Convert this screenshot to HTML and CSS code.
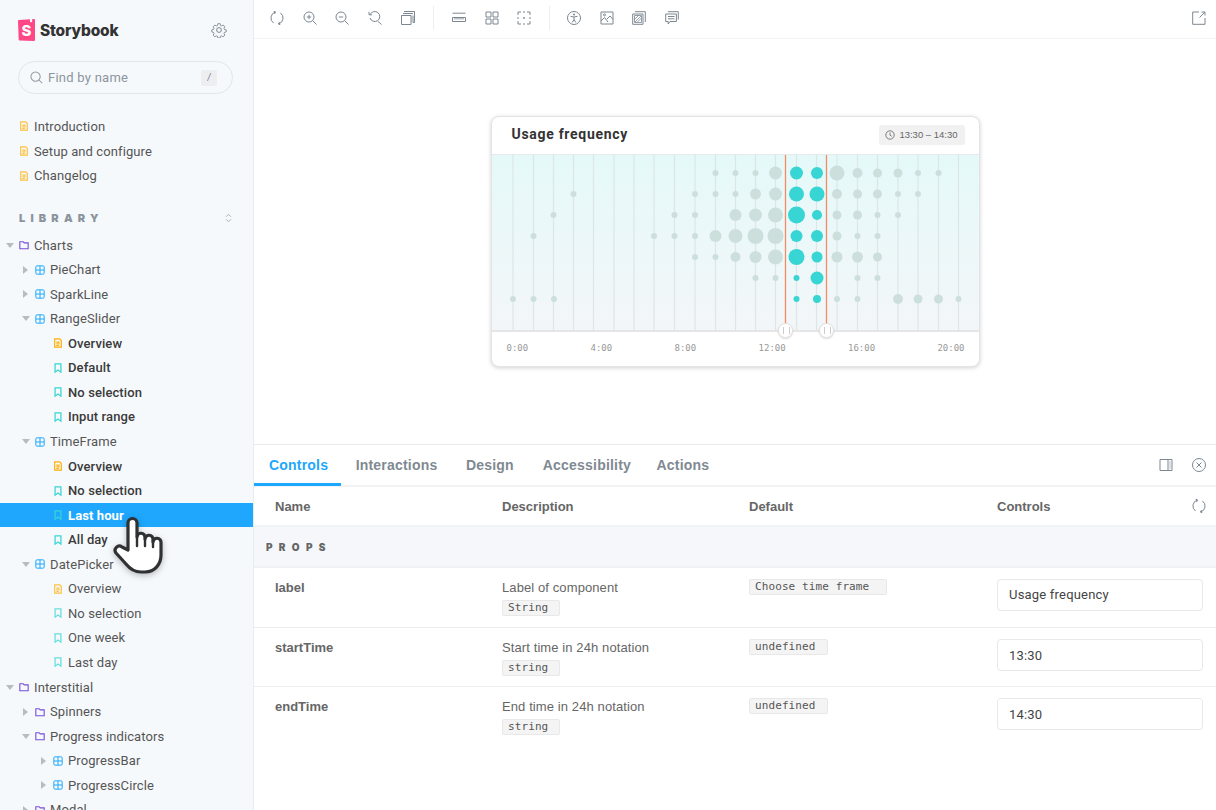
FILE: index.html
```html
<!DOCTYPE html>
<html lang="en">
<head>
<meta charset="utf-8">
<title>Storybook</title>
<link rel="stylesheet" href="styles.css">
</head>
<body>
<svg class="defs" width="0" height="0" aria-hidden="true">
  <symbol id="i-doc" viewBox="0 0 12 12"><path d="M2 1h6l2 2v8H2zM4 5h4M4 7h4M4 9h3" fill="none" stroke="currentColor" stroke-width="1.400"/></symbol>
  <symbol id="i-book" viewBox="0 0 12 12"><path d="M2.500 1h7v10L6 8.500 2.500 11z" fill="none" stroke="currentColor" stroke-width="1.500"/></symbol>
  <symbol id="i-folder" viewBox="0 0 12 12"><path d="M1 2h4l1.200 1.400H11v7H1z" fill="none" stroke="currentColor" stroke-width="1.300"/></symbol>
  <symbol id="i-comp" viewBox="0 0 12 12"><path d="M2.500 1h7A1.500 1.500 0 0 1 11 2.500v7A1.500 1.500 0 0 1 9.500 11h-7A1.500 1.500 0 0 1 1 9.500v-7A1.500 1.500 0 0 1 2.500 1zM6 1v10M1 6h10" fill="none" stroke="currentColor" stroke-width="1.200"/></symbol>
  <symbol id="t-sync" viewBox="0 0 14 14"><path d="M5.500 1A6.200 6.200 0 0 0 3.500 12M8.500 13A6.200 6.200 0 0 0 10.500 2M3.600 .2l1.900.8-1 1.900M10.400 13.800 8.500 13l1-1.900" fill="none" stroke="currentColor"/></symbol>
  <symbol id="t-zin" viewBox="0 0 14 14"><circle cx="6" cy="6" r="5" fill="none" stroke="currentColor"/><path d="M9.700 9.700 13.500 13.500M3.800 6h4.400M6 3.800v4.400" fill="none" stroke="currentColor"/></symbol>
  <symbol id="t-zout" viewBox="0 0 14 14"><circle cx="6" cy="6" r="5" fill="none" stroke="currentColor"/><path d="M9.700 9.700 13.500 13.500M3.800 6h4.400" fill="none" stroke="currentColor"/></symbol>
  <symbol id="t-zreset" viewBox="0 0 14 14"><path d="M2.200 3.500A5 5 0 1 1 2 7M1 .8v3h3M9.700 10.200 13.500 13.500" fill="none" stroke="currentColor"/></symbol>
  <symbol id="t-stack" viewBox="0 0 14 14"><path d="M.5 4.500h9.500v9H.5zM2 2.500h10M3 .5h10.500v11H12" fill="none" stroke="currentColor"/><path d="M10.500 4.500H13v7h-2.500z" fill="currentColor" opacity=".5"/></symbol>
  <symbol id="t-ruler" viewBox="0 0 14 14"><path d="M.5 2.200h13M.5 6.500h13v4h-13z" fill="none" stroke="currentColor"/><path d="M3 6.500v2M5 6.500v2M7 6.500v2M9 6.500v2M11 6.500v2" stroke="currentColor" fill="none"/></symbol>
  <symbol id="t-grid" viewBox="0 0 14 14"><path d="M1 1h5v5H1zM8 1h5v5H8zM1 8h5v5H1zM8 8h5v5H8z" fill="none" stroke="currentColor"/></symbol>
  <symbol id="t-outline" viewBox="0 0 14 14"><path d="M4 1H1v3M10 1h3v3M4 13H1v-3M10 13h3v-3M1 6v2M13 6v2M6 1h2M6 13h2" fill="none" stroke="currentColor"/><circle cx="7" cy="7" r=".9" fill="currentColor"/></symbol>
  <symbol id="t-a11y" viewBox="0 0 14 14"><circle cx="7" cy="7" r="6.500" fill="none" stroke="currentColor"/><circle cx="7" cy="3.600" r="1" fill="currentColor"/><path d="M3.500 5.300 7 6l3.500-.7M7 6v2.500M7 8.500l-1.800 3M7 8.500l1.800 3" fill="none" stroke="currentColor"/></symbol>
  <symbol id="t-photo" viewBox="0 0 14 14"><path d="M1 1h12v12H1zM1 10l3.500-3.500L8 11M7 8l3-3 3 3.500" fill="none" stroke="currentColor"/><circle cx="4.500" cy="3.800" r="1" fill="none" stroke="currentColor"/></symbol>
  <symbol id="t-contrast" viewBox="0 0 14 14"><path d="M3 .7h10.300V11M.7 3h10.300v10.300H.7z" fill="none" stroke="currentColor"/><path d="M2.500 4.500h7v7h-7zM3 11l6-6M5 11.500l4.500-4.500M2.500 8.500l4-4" fill="none" stroke="currentColor" stroke-width=".8"/></symbol>
  <symbol id="t-comment" viewBox="0 0 14 14"><path d="M3 .7h10.300v8M.7 3h10.700v7.500H5l-1.800 2.500v-2.500H.7zM3 5.500h6.500M3 7.800h6.500" fill="none" stroke="currentColor"/></symbol>
  <symbol id="t-open" viewBox="0 0 14 14"><path d="M7 1H.7v12.300H13V7M7.500 6.500 13 1M9.500 1H13v3.500" fill="none" stroke="currentColor"/></symbol>
  <symbol id="t-side" viewBox="0 0 14 14"><path d="M1 1.500h12v11H1zM9 1.500v11M10.500 4h1M10.500 6h1M10.500 8h1M10.500 10h1" fill="none" stroke="currentColor"/></symbol>
  <symbol id="t-close" viewBox="0 0 14 14"><circle cx="7" cy="7" r="6.500" fill="none" stroke="currentColor"/><path d="m4.500 4.500 5 5M9.500 4.500l-5 5" fill="none" stroke="currentColor"/></symbol>
</svg>

<div class="app">
  <aside class="sidebar">
    <header class="brand">
      <svg class="logo" viewBox="0 0 17 22" width="17" height="22">
        <path d="M.7 20.600 0 2a1 1 0 0 1 1-1l11-.7v3.200l1-.8 1.100.8V.2l1.800-.1a1 1 0 0 1 1.100 1v19.800a1 1 0 0 1-1 1L1.700 21.500a1 1 0 0 1-1-.9z" fill="#ff4785"/>
        <text x="8.500" y="16.800" class="logo-s">S</text>
      </svg>
      <span class="wordmark">Storybook</span>
      <svg class="gear" viewBox="0 0 16 16" width="16" height="16"><path d="M6.700 1h2.600l.4 1.900 1.300.6 1.700-1 1.800 1.900-1 1.600.6 1.400 1.900.4v2.400l-1.900.4-.6 1.400 1 1.700-1.800 1.800-1.700-1-1.300.5-.4 1.900H6.700l-.4-1.900-1.300-.5-1.700 1-1.800-1.800 1-1.700-.6-1.400-1.900-.4V7.800l1.900-.4.6-1.400-1-1.600 1.800-1.900 1.700 1 1.300-.6z" transform="translate(.8 .8) scale(.9)" fill="none" stroke="#7d8791"/><circle cx="8" cy="8" r="2.400" fill="none" stroke="#7d8791"/></svg>
    </header>

    <div class="search">
      <svg class="search-icon" viewBox="0 0 14 14" width="13" height="13"><circle cx="6" cy="6" r="5" fill="none" stroke="#8f98a1" stroke-width="1.100"/><path d="m9.700 9.700 3.500 3.500" stroke="#8f98a1" stroke-width="1.100"/></svg>
      <span class="search-text">Find by name</span>
      <kbd class="search-key">/</kbd>
    </div>

    <nav class="tree tree-top">
      <div class="row d0 faded"><i class="arrow blank"></i><svg class="ic doc"><use href="#i-doc"/></svg><span>Introduction</span></div>
      <div class="row d0 faded"><i class="arrow blank"></i><svg class="ic doc"><use href="#i-doc"/></svg><span>Setup and configure</span></div>
      <div class="row d0 faded"><i class="arrow blank"></i><svg class="ic doc"><use href="#i-doc"/></svg><span>Changelog</span></div>
    </nav>

    <div class="lib-head"><span>LIBRARY</span><svg viewBox="0 0 8 12" width="7" height="10"><path d="M1 4.500 4 1.500l3 3M1 7.500l3 3 3-3" fill="none" stroke="#9aa3ad"/></svg></div>

    <nav class="tree">
      <div class="row d0"><i class="arrow open"></i><svg class="ic folder"><use href="#i-folder"/></svg><span>Charts</span></div>
      <div class="row d1"><i class="arrow"></i><svg class="ic comp"><use href="#i-comp"/></svg><span>PieChart</span></div>
      <div class="row d1"><i class="arrow"></i><svg class="ic comp"><use href="#i-comp"/></svg><span>SparkLine</span></div>
      <div class="row d1"><i class="arrow open"></i><svg class="ic comp"><use href="#i-comp"/></svg><span>RangeSlider</span></div>
      <div class="row d2 strong"><svg class="ic doc"><use href="#i-doc"/></svg><span>Overview</span></div>
      <div class="row d2 strong"><svg class="ic book"><use href="#i-book"/></svg><span>Default</span></div>
      <div class="row d2 strong"><svg class="ic book"><use href="#i-book"/></svg><span>No selection</span></div>
      <div class="row d2 strong"><svg class="ic book"><use href="#i-book"/></svg><span>Input range</span></div>
      <div class="row d1"><i class="arrow open"></i><svg class="ic comp"><use href="#i-comp"/></svg><span>TimeFrame</span></div>
      <div class="row d2 strong"><svg class="ic doc"><use href="#i-doc"/></svg><span>Overview</span></div>
      <div class="row d2 strong"><svg class="ic book"><use href="#i-book"/></svg><span>No selection</span></div>
      <div class="row d2 selected"><svg class="ic book"><use href="#i-book"/></svg><span>Last hour</span></div>
      <div class="row d2 strong"><svg class="ic book"><use href="#i-book"/></svg><span>All day</span></div>
      <div class="row d1"><i class="arrow open"></i><svg class="ic comp"><use href="#i-comp"/></svg><span>DatePicker</span></div>
      <div class="row d2 faded"><svg class="ic doc"><use href="#i-doc"/></svg><span>Overview</span></div>
      <div class="row d2 faded"><svg class="ic book"><use href="#i-book"/></svg><span>No selection</span></div>
      <div class="row d2 faded"><svg class="ic book"><use href="#i-book"/></svg><span>One week</span></div>
      <div class="row d2 faded"><svg class="ic book"><use href="#i-book"/></svg><span>Last day</span></div>
      <div class="row d0"><i class="arrow open"></i><svg class="ic folder"><use href="#i-folder"/></svg><span>Interstitial</span></div>
      <div class="row d1"><i class="arrow"></i><svg class="ic folder"><use href="#i-folder"/></svg><span>Spinners</span></div>
      <div class="row d1"><i class="arrow open"></i><svg class="ic folder"><use href="#i-folder"/></svg><span>Progress indicators</span></div>
      <div class="row d2x"><i class="arrow"></i><svg class="ic comp"><use href="#i-comp"/></svg><span>ProgressBar</span></div>
      <div class="row d2x"><i class="arrow"></i><svg class="ic comp"><use href="#i-comp"/></svg><span>ProgressCircle</span></div>
      <div class="row d1"><i class="arrow"></i><svg class="ic folder"><use href="#i-folder"/></svg><span>Modal</span></div>
    </nav>
  </aside>

  <main class="main">
    <div class="toolbar">
      <svg class="tool"><use href="#t-sync"/></svg>
      <svg class="tool"><use href="#t-zin"/></svg>
      <svg class="tool"><use href="#t-zout"/></svg>
      <svg class="tool"><use href="#t-zreset"/></svg>
      <svg class="tool"><use href="#t-stack"/></svg>
      <i class="tool-sep"></i>
      <svg class="tool"><use href="#t-ruler"/></svg>
      <svg class="tool"><use href="#t-grid"/></svg>
      <svg class="tool"><use href="#t-outline"/></svg>
      <i class="tool-sep tool-sep-b"></i>
      <svg class="tool"><use href="#t-a11y"/></svg>
      <svg class="tool"><use href="#t-photo"/></svg>
      <svg class="tool"><use href="#t-contrast"/></svg>
      <svg class="tool"><use href="#t-comment"/></svg>
      <svg class="tool tool-end"><use href="#t-open"/></svg>
    </div>

    <section class="canvas">
      <div class="card">
        <div class="card-head">
          <span class="card-title">Usage frequency</span>
          <span class="range-chip"><svg viewBox="0 0 12 12" width="10" height="10"><circle cx="6" cy="6" r="5" fill="none" stroke="#666"/><path d="M6 3v3.200l2 1.300" fill="none" stroke="#666"/></svg>13:30 – 14:30</span>
        </div>
        <div class="plot">
          <svg class="plot-svg" viewBox="0 0 487 175" width="487" height="175">
            <defs><linearGradient id="plot-bg" x1="0" y1="0" x2="0" y2="1"><stop offset="0" stop-color="#e5f9f9"/><stop offset="1" stop-color="#f3f6f9"/></linearGradient></defs>
            <rect width="487" height="175" fill="url(#plot-bg)"/>
            <g class="gridlines">
              <path d="M21 0v175M41.500 0v175M61.500 0v175M81.500 0v175M101.500 0v175M122 0v175M142 0v175M162 0v175M182.500 0v175M203 0v175M223.500 0v175M243.500 0v175M263.500 0v175M283.500 0v175M304.500 0v175M324.500 0v175M345 0v175M365.500 0v175M385.500 0v175M406 0v175M426 0v175M446.500 0v175M466.500 0v175"/>
            </g>
            <g class="dots">
              <circle cx="223.500" cy="18" r="3"/><circle cx="243.500" cy="18" r="3"/><circle cx="263.500" cy="18" r="3"/><circle cx="283.500" cy="18" r="6.500"/><circle cx="345" cy="18" r="7.500"/><circle cx="365.500" cy="18" r="5"/><circle cx="385.500" cy="18" r="4.500"/><circle cx="406" cy="18" r="4.500"/><circle cx="426" cy="18" r="3"/><circle cx="446.500" cy="18" r="3"/>
              <circle cx="81.500" cy="39" r="3"/><circle cx="203" cy="39" r="3"/><circle cx="223.500" cy="39" r="3"/><circle cx="243.500" cy="39" r="3"/><circle cx="263.500" cy="39" r="5.500"/><circle cx="283.500" cy="39" r="6.500"/><circle cx="345" cy="39" r="5"/><circle cx="365.500" cy="39" r="4.500"/><circle cx="385.500" cy="39" r="4.500"/><circle cx="406" cy="39" r="3"/><circle cx="426" cy="39" r="3"/>
              <circle cx="61.500" cy="60" r="3"/><circle cx="182.500" cy="60" r="3"/><circle cx="203" cy="60" r="3"/><circle cx="243.500" cy="60" r="6"/><circle cx="263.500" cy="60" r="6.500"/><circle cx="283.500" cy="60" r="7.500"/><circle cx="345" cy="60" r="4.500"/><circle cx="365.500" cy="60" r="4.500"/><circle cx="385.500" cy="60" r="3"/><circle cx="406" cy="60" r="3"/>
              <circle cx="41.500" cy="81" r="3"/><circle cx="162" cy="81" r="3"/><circle cx="182.500" cy="81" r="3"/><circle cx="203" cy="81" r="3"/><circle cx="223.500" cy="81" r="6"/><circle cx="243.500" cy="81" r="7"/><circle cx="263.500" cy="81" r="8"/><circle cx="283.500" cy="81" r="8"/><circle cx="345" cy="81" r="4.500"/><circle cx="365.500" cy="81" r="3"/><circle cx="385.500" cy="81" r="3"/>
              <circle cx="203" cy="102" r="3"/><circle cx="223.500" cy="102" r="3"/><circle cx="243.500" cy="102" r="5"/><circle cx="263.500" cy="102" r="6"/><circle cx="283.500" cy="102" r="7.500"/><circle cx="345" cy="102" r="5.500"/><circle cx="365.500" cy="102" r="5.500"/><circle cx="385.500" cy="102" r="4.500"/>
              <circle cx="263.500" cy="123" r="3"/><circle cx="283.500" cy="123" r="3"/><circle cx="365.500" cy="123" r="3"/><circle cx="385.500" cy="123" r="3"/>
              <circle cx="21" cy="144" r="3"/><circle cx="41.500" cy="144" r="3"/><circle cx="62" cy="144" r="3"/><circle cx="345" cy="144" r="3"/><circle cx="365.500" cy="144" r="3"/><circle cx="406" cy="144" r="5"/><circle cx="426" cy="144" r="4.500"/><circle cx="446.500" cy="144" r="4.500"/><circle cx="466.500" cy="144" r="3"/>
            </g>
            <g class="dots-on">
              <circle cx="304.500" cy="18" r="6.500"/><circle cx="325" cy="18" r="6"/>
              <circle cx="304.500" cy="39" r="7.500"/><circle cx="325" cy="39" r="7.500"/>
              <circle cx="304.500" cy="60" r="8.500"/><circle cx="325" cy="60" r="5"/>
              <circle cx="304.500" cy="81" r="6"/><circle cx="325" cy="81" r="6"/>
              <circle cx="304.500" cy="102" r="8"/><circle cx="325" cy="102" r="5.500"/>
              <circle cx="304.500" cy="123" r="3"/><circle cx="325" cy="123" r="6.500"/>
              <circle cx="304.500" cy="144" r="3"/><circle cx="325" cy="144" r="4"/>
            </g>
            <path class="marker" d="M293.500 0v175M334.500 0v175"/>
          </svg>
          <i class="handle handle-a"></i>
          <i class="handle handle-b"></i>
        </div>
        <div class="axis"><span>0:00</span><span>4:00</span><span>8:00</span><span>12:00</span><span>16:00</span><span>20:00</span></div>
      </div>
    </section>

    <section class="panel">
      <div class="tabs">
        <span class="tab active">Controls</span>
        <span class="tab">Interactions</span>
        <span class="tab">Design</span>
        <span class="tab">Accessibility</span>
        <span class="tab">Actions</span>
        <svg class="tool tab-icon tab-icon-first"><use href="#t-side"/></svg>
        <svg class="tool tab-icon"><use href="#t-close"/></svg>
      </div>
      <div class="args">
        <div class="arg-row arg-head">
          <span>Name</span><span>Description</span><span>Default</span>
          <span class="ctrl-head">Controls<svg class="tool"><use href="#t-sync"/></svg></span>
        </div>
        <div class="section-row">PROPS</div>
        <div class="arg-row arg-body">
          <b>label</b>
          <div><div class="desc">Label of component</div><code class="badge">String</code></div>
          <div class="default-cell"><code class="badge badge-wide">Choose time frame</code></div>
          <div class="field">Usage frequency</div>
        </div>
        <div class="arg-row arg-body">
          <b>startTime</b>
          <div><div class="desc">Start time in 24h notation</div><code class="badge">string</code></div>
          <div class="default-cell"><code class="badge">undefined</code></div>
          <div class="field">13:30</div>
        </div>
        <div class="arg-row arg-body arg-last">
          <b>endTime</b>
          <div><div class="desc">End time in 24h notation</div><code class="badge">string</code></div>
          <div class="default-cell"><code class="badge">undefined</code></div>
          <div class="field">14:30</div>
        </div>
      </div>
    </section>
  </main>
</div>

<svg class="hand" viewBox="0 0 58 68" width="58" height="68">
  <path d="M18 39V12a4.500 4.500 0 0 1 9 0V26a4 4 0 0 1 8 .5V28a4 4 0 0 1 8 .5V31a3.800 3.800 0 0 1 8 .5V44c0 9-6 17-16 17h-4c-7 0-11-3-15-8L6 42c-3-4 2-9 6-6z" fill="#fff" stroke="#2f3133" stroke-width="3.200" stroke-linejoin="round"/>
  <path d="M27 26v9M35 27v8M43 29v7" fill="none" stroke="#2f3133" stroke-width="2.400" stroke-linecap="round"/>
</svg>
</body>
</html>
```
FILE: styles.css
```css
* { box-sizing: border-box; }
html, body { margin: 0; height: 100%; overflow: hidden; }
body { position: relative; font-family: "Roboto", "Liberation Sans", sans-serif; background: #fff; color: #333; }
.defs { position: absolute; }
.app { display: flex; height: 810px; }

/* sidebar */
.sidebar { width: 254px; flex: none; height: 810px; overflow: hidden; background: #f6f9fc; border-right: 1px solid #e9ecef; }
.brand { display: flex; align-items: center; height: 22px; margin: 19px 0 0 18px; }
.logo { flex: none; }
.logo-s { font: 800 15px "Inter", sans-serif; fill: #fff; text-anchor: middle; }
.wordmark { margin-left: 5px; font: 800 15.500px "Inter", "Noto Sans", sans-serif; color: #333; letter-spacing: -.2px; }
.gear { margin-left: auto; margin-right: 26px; }
.search { display: flex; align-items: center; width: 215px; height: 33px; margin: 20px 0 0 18px; padding: 0 15px 0 10px; border: 1px solid #e3e6e9; border-radius: 17px; background: #f6f9fc; }
.search-icon { flex: none; margin: 0 5px 0 1px; }
.search-text { font-size: 13px; color: #8d959d; letter-spacing: .25px; }
.search-key { margin-left: auto; width: 16px; height: 16px; border-radius: 2px; background: #eceef0; color: #7d868f; font: italic 10px/16px "Liberation Sans", sans-serif; text-align: center; }
.tree { display: flex; flex-direction: column; }
.tree-top { margin-top: 20.200px; }
.row { display: flex; align-items: center; height: 24.550px; flex: none; font-size: 13px; color: #555; letter-spacing: .1px; white-space: nowrap; }
.row span { margin-left: 4px; }
.d0 { padding-left: 6px; }
.d1 { padding-left: 22px; }
.d2 { padding-left: 52px; }
.d2x { padding-left: 40px; }
.strong { color: #3a3a3a; font-weight: 500; }
.selected { background: #1ea7fd; color: #fff; font-weight: 700; }
.selected .ic { color: #fff; }
.arrow { flex: none; width: 0; height: 0; margin: 0 6px 0 1px; border-style: solid; border-width: 4px 0 4px 5px; border-color: transparent transparent transparent #b6bcc2; }
.arrow.open { border-width: 5px 4px 0 4px; border-color: #b6bcc2 transparent transparent transparent; margin: 0 4px 0 0; }
.arrow.blank { border-color: transparent; }
.ic { flex: none; width: 10px; height: 10px; margin: 0 1px; }
.ic.doc { color: #ffae00; }
.ic.book { color: #37d5d3; }
.ic.folder { color: #774dd7; }
.ic.comp { color: #1ea7fd; }
.faded .ic { opacity: .75; }
.lib-head { display: flex; align-items: center; justify-content: space-between; height: 16px; margin: 22px 0 0 0; padding: 0 21px 0 19px; font: 900 11px "Inter", "Noto Sans", sans-serif; letter-spacing: 5.200px; color: #8b949d; }
.lib-head + .tree { margin-top: 7.075px; }

/* main */
.main { flex: 1; min-width: 0; display: flex; flex-direction: column; height: 810px; }
.toolbar { display: flex; align-items: center; height: 39px; flex: none; padding: 0 10px 2px 16px; border-bottom: 1px solid #f2f3f4; }
.tool { flex: none; width: 14px; height: 14px; color: #7d8791; }
.toolbar .tool { margin-right: 18.700px; }
.toolbar .tool-end { margin: 0 0 0 auto; }
.tool-sep { flex: none; width: 1px; height: 24px; margin: 0 17.500px 0 0; background: #eceef0; }
.tool-sep-b { margin: 0 17px 0 -1px; }
.canvas { flex: 1; display: flex; align-items: center; justify-content: center; min-height: 0; }
.card { width: 489px; height: 251px; display: flex; flex-direction: column; background: #fff; border: 1px solid #e4e4e4; border-radius: 8px; box-shadow: 0 1px 4px rgba(0, 0, 0, .18); }
.card-head { display: flex; align-items: center; justify-content: space-between; height: 37px; flex: none; padding: 0 14px 2px 20px; }
.card-title { margin-bottom: 2px; font: 700 14px "Roboto", sans-serif; letter-spacing: .7px; color: #333; }
.range-chip { display: inline-flex; align-items: center; gap: 4px; height: 20px; padding: 0 7px 0 6px; border-radius: 3px; background: #f1f1f1; font: 9.500px "Liberation Sans", sans-serif; color: #666; }
.plot { position: relative; height: 178px; flex: none; border-top: 1px solid #e8e8e8; border-bottom: 2px solid #e6e6e6; }
.plot-svg { display: block; }
.gridlines path { stroke: #dce6e8; stroke-width: 1.200; fill: none; }
.dots circle { fill: #cddfdd; }
.dots-on circle { fill: #37d5d3; }
.marker { stroke: #f58a63; stroke-width: 1.300; fill: none; }
.handle { position: absolute; top: 168px; width: 15px; height: 15px; border: 1px solid #e2e2e2; border-radius: 50%; background: #fff; box-shadow: 0 1px 2px rgba(0, 0, 0, .15); }
.handle::before { content: ""; position: absolute; left: 4px; top: 3px; width: 5px; height: 7px; border-left: 1px solid #ccc; border-right: 1px solid #ccc; }
.handle-a { left: 286px; }
.handle-b { left: 327px; }
.axis { display: flex; justify-content: space-between; padding: 11px 14px 0 15px; font: 9px "DejaVu Sans Mono", monospace; color: #999; }

/* panel */
.panel { flex: none; height: 366px; border-top: 1px solid #eaeaea; }
.tabs { display: flex; align-items: stretch; height: 42px; border-bottom: 2px solid #f2f3f4; font: 700 14px "Liberation Sans", sans-serif; letter-spacing: .2px; color: #7f8992; }
.tab { display: flex; align-items: center; padding: 2px 14.500px 0; margin-bottom: -1px; border-bottom: 3px solid transparent; }
.tab.active { padding: 2px 13px 0 15px; color: #1ea7fd; border-bottom-color: #1ea7fd; }
.tab:nth-child(3) { padding: 2px 15px 0 14px; }
.tab:nth-child(4) { padding: 2px 11px 0 14px; }
.tab-icon { align-self: center; margin-bottom: 1px; }
.tab-icon-first { margin-left: auto; margin-right: 19px; }
.tabs .tab-icon:last-child { margin-right: 10px; }
.arg-row { display: grid; grid-template-columns: 227px 247px 248px 1fr; padding: 0 13px 0 21px; font-size: 13px; }
.arg-head { align-items: center; height: 40px; border-bottom: 2px solid #f2f3f4; font: 700 13px "Liberation Sans", sans-serif; color: #666; }
.ctrl-head { display: flex; align-items: center; justify-content: space-between; }
.ctrl-head .tool { margin-right: -3px; }
.section-row { height: 41px; padding: 0 0 0 12px; background: #f5f7fa; border-bottom: 2px solid #eff1f3; font: 900 10px/41px "Inter", "Noto Sans", sans-serif; letter-spacing: 6.300px; color: #666; }
.arg-body { align-items: start; padding-top: 11px; border-bottom: 1px solid #ebedef; color: #666; font-family: "Liberation Sans", sans-serif; height: 59.500px; }
.arg-body b { font-size: 13px; line-height: 16px; margin-top: 1px; }
.arg-last { border-bottom: 0; }
.desc { margin-top: 1px; line-height: 16px; margin-bottom: 4px; letter-spacing: .1px; }
.badge { display: inline-block; height: 16px; padding: 0 11px 0 5px; border: 1px solid #e8e8e8; border-radius: 2px; background: #f4f4f4; font: 11px/14px "DejaVu Sans Mono", monospace; letter-spacing: .1px; color: #555; vertical-align: top; }
.badge-wide { padding-right: 17px; }
.field { height: 32px; padding: 0 11px; border: 1px solid #e8e8e8; border-radius: 4px; background: #fff; line-height: 30px; color: #444; letter-spacing: .2px; font-family: "Roboto", sans-serif; }
.arg-body + .arg-body .field { line-height: 31px; }

/* cursor */
.hand { position: absolute; left: 110px; top: 511px; filter: drop-shadow(0 2px 3px rgba(0, 0, 0, .25)); }
```
